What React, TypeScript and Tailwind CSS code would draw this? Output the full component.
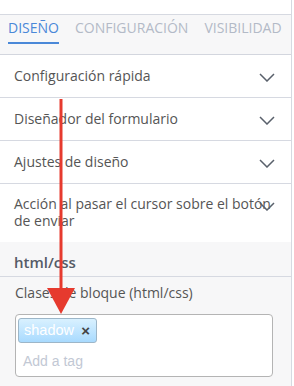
import React from 'react';

const Chevron = () => (
  <svg width="16" height="9" viewBox="0 0 16 9" className="absolute right-[16px] top-[18px]" fill="none">
    <path d="M1 1l7 7 7-7" stroke="#59606b" strokeWidth="1.5" />
  </svg>
);

const rows = ['Configuración rápida', 'Diseñador del formulario', 'Ajustes de diseño'];

export default function App() {
  return (
    <div className="relative w-[294px] h-[386px] overflow-hidden bg-white font-['Open_Sans',sans-serif]">
      <div className="w-[292px] h-full border-r border-[#d6d9e1] flex flex-col">
        <div className="h-[15px] border-b border-[#d6d9e1]" />

        {/* tabs */}
        <div className="flex gap-4 px-2 pt-[3px] bg-[#f7f7f8] border-b border-[#d3d6de]">
          <div className="flex flex-col">
            <span className="text-[14px] leading-[20px] text-[#4a88d8]">DISEÑO</span>
            <span className="mt-[4px] h-[2px] bg-[#4a88d8]" />
            <span className="h-[10px]" />
          </div>
          <span className="text-[14px] leading-[20px] text-[#b3bac7]">CONFIGURACIÓN</span>
          <span className="text-[14px] leading-[20px] text-[#b3bac7]">VISIBILIDAD</span>
        </div>

        {rows.map((r) => (
          <div key={r} className="relative px-[14px] py-3 leading-[18px] text-[14px] text-[#555] border-b border-[#d6d9e1]">
            {r}
            <Chevron />
          </div>
        ))}
        <div className="relative pl-[14px] pr-[14px] pt-3 pb-[13px] leading-[16.5px] text-[14px] text-[#555]">
          Acción al pasar el cursor sobre el botón de enviar
          <Chevron />
        </div>

        <div className="flex-1 bg-[#f7f7f8]">
          <div className="px-[14px] pt-[10px] pb-[4px] text-[15px] leading-[20px] font-semibold text-[#555b66] border-b border-[#d6d9e1]">
            html/css
          </div>
          <div className="px-[15px] pt-[6px]">
            <div className="text-[14px] leading-[20px] text-[#555]">Clases de bloque (html/css)</div>
            <div className="mt-[11px] w-[258px] h-[63px] bg-white border border-[#b4b4b4] rounded-[4px] pt-[3px] pl-[2px] font-['Liberation_Sans',Arial,sans-serif]">
              <div className="inline-flex items-center h-[25px] w-[79px] pl-[5px] pr-[6px] justify-between rounded-[3px] border border-[#9db6c8] bg-gradient-to-b from-[#d9f1ff] to-[#a8dafe]">
                <span className="text-[14.5px] text-white leading-none">shadow</span>
                <span className="text-[15px] font-bold text-[#444] leading-none">×</span>
              </div>
              <div className="pl-[5px] mt-[8px] text-[14px] leading-[20px] text-[#c2c8d4]">Add a tag</div>
            </div>
          </div>
        </div>
      </div>

      {/* annotation arrow */}
      <svg className="absolute left-0 top-0 pointer-events-none" width="294" height="386">
        <line x1="61" y1="99" x2="61" y2="292" stroke="#e63a2e" strokeWidth="3" />
        <polygon points="47,288 75,288 61,314" fill="#e63a2e" />
      </svg>
    </div>
  );
}
